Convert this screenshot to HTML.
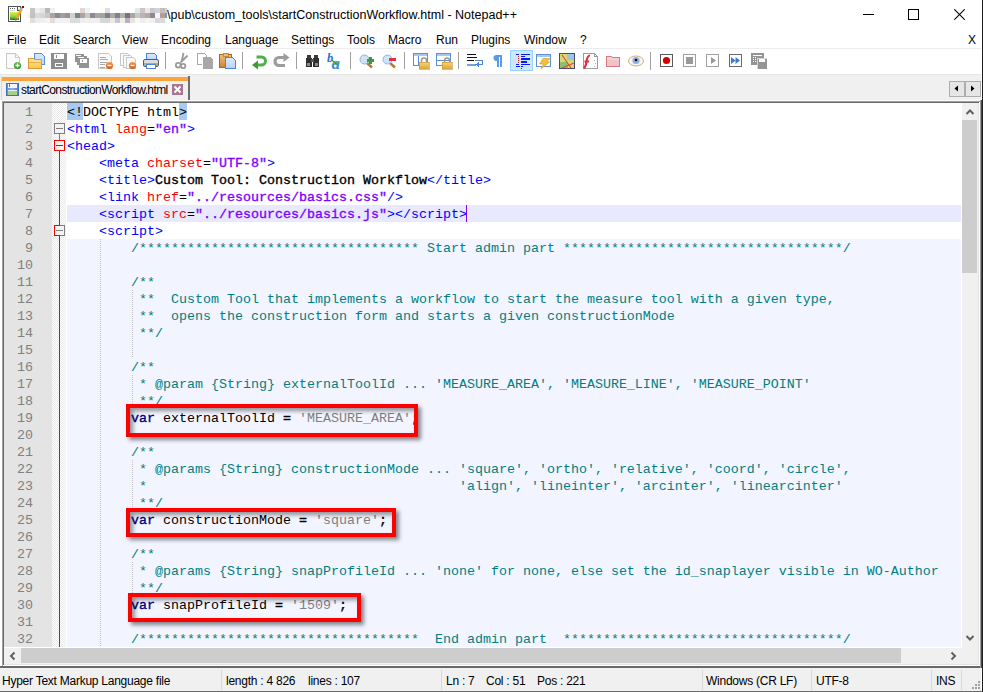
<!DOCTYPE html>
<html><head><meta charset="utf-8">
<style>
*{margin:0;padding:0;box-sizing:border-box}
html,body{width:983px;height:692px;overflow:hidden;background:#fff;position:relative;font-family:"Liberation Sans",sans-serif}
.abs{position:absolute}
.mi{position:absolute;top:33px;font-size:12px;line-height:15px;color:#000;white-space:pre}
.si{position:absolute;top:674px;font-size:12px;line-height:15px;color:#000;white-space:pre;letter-spacing:-0.25px}
.ss{position:absolute;top:670px;width:1px;height:20px;background:#d7d7d7}
.lbg{position:absolute;left:67px;width:894px;height:17px}
.cl{position:absolute;left:67px;height:17px;font-family:"Liberation Mono",monospace;font-size:13.3333px;line-height:17px;white-space:pre;padding-top:1px}
.ln{position:absolute;left:4px;width:29px;text-align:right;height:17px;font-family:"Liberation Mono",monospace;font-size:13.3333px;line-height:17px;color:#808080;padding-top:1px}
.ig{position:absolute;width:1px;background:repeating-linear-gradient(to bottom,#c0c0c0 0 1px,transparent 1px 2px)}
.rb{position:absolute;border:4px solid #ff0000;box-shadow:3px 3px 4px rgba(0,0,0,.45), inset 3px 3px 4px rgba(0,0,0,.40)}
</style></head><body>
<!-- title bar -->
<svg class="abs" style="left:0;top:0" width="170" height="26" viewBox="0 0 170 26" shape-rendering="crispEdges">
<rect x="30" y="8" width="5" height="5" fill="#c8c4c0"/>
<rect x="35" y="8" width="5" height="5" fill="#eef0f2"/>
<rect x="40" y="8" width="5" height="5" fill="#e6e4e6"/>
<rect x="45" y="8" width="5" height="5" fill="#bcb6b4"/>
<rect x="50" y="8" width="5" height="5" fill="#eef2f6"/>
<rect x="80" y="8" width="5" height="5" fill="#e2d6d2"/>
<rect x="85" y="8" width="5" height="5" fill="#eaf2fc"/>
<rect x="100" y="8" width="5" height="5" fill="#fffdf0"/>
<rect x="105" y="8" width="5" height="5" fill="#e0dcec"/>
<rect x="135" y="8" width="5" height="5" fill="#e6e6e6"/>
<rect x="140" y="8" width="5" height="5" fill="#c8c6cc"/>
<rect x="145" y="8" width="5" height="5" fill="#f0e8dc"/>
<rect x="150" y="8" width="5" height="5" fill="#c8c8d0"/>
<rect x="155" y="8" width="5" height="5" fill="#d0d4d8"/>
<rect x="160" y="8" width="5" height="5" fill="#c8bcb4"/>
<rect x="165" y="8" width="2" height="5" fill="#c8d0e0"/>
<rect x="30" y="13" width="5" height="5" fill="#c0c0d0"/>
<rect x="35" y="13" width="5" height="5" fill="#d8dadb"/>
<rect x="40" y="13" width="5" height="5" fill="#d6d6d6"/>
<rect x="45" y="13" width="5" height="5" fill="#ccc6cc"/>
<rect x="50" y="13" width="5" height="5" fill="#b0a49a"/>
<rect x="55" y="13" width="5" height="5" fill="#8c8896"/>
<rect x="60" y="13" width="5" height="5" fill="#a0a0a0"/>
<rect x="65" y="13" width="5" height="5" fill="#a08e90"/>
<rect x="70" y="13" width="5" height="5" fill="#ccd4d4"/>
<rect x="75" y="13" width="5" height="5" fill="#7e828c"/>
<rect x="80" y="13" width="5" height="5" fill="#aaa2aa"/>
<rect x="85" y="13" width="5" height="5" fill="#d2c8b8"/>
<rect x="90" y="13" width="5" height="5" fill="#8a8a98"/>
<rect x="95" y="13" width="5" height="5" fill="#b0a4a0"/>
<rect x="100" y="13" width="5" height="5" fill="#98aaa8"/>
<rect x="105" y="13" width="5" height="5" fill="#8c7888"/>
<rect x="110" y="13" width="5" height="5" fill="#a8aca4"/>
<rect x="115" y="13" width="5" height="5" fill="#80809a"/>
<rect x="120" y="13" width="5" height="5" fill="#b0b4a4"/>
<rect x="125" y="13" width="5" height="5" fill="#8c6c7c"/>
<rect x="130" y="13" width="5" height="5" fill="#a4aaa4"/>
<rect x="135" y="13" width="5" height="5" fill="#bccad4"/>
<rect x="140" y="13" width="5" height="5" fill="#c4b0ac"/>
<rect x="145" y="13" width="5" height="5" fill="#a8b0a8"/>
<rect x="150" y="13" width="5" height="5" fill="#948498"/>
<rect x="155" y="13" width="5" height="5" fill="#f4f8fc"/>
<rect x="160" y="13" width="5" height="5" fill="#b0a098"/>
<rect x="165" y="13" width="2" height="5" fill="#7c98c0"/>
<rect x="30" y="18" width="5" height="5" fill="#e4dcd8"/>
<rect x="35" y="18" width="5" height="5" fill="#e8eef2"/>
<rect x="40" y="18" width="5" height="5" fill="#f0f0f0"/>
<rect x="45" y="18" width="5" height="5" fill="#f4f4f4"/>
<rect x="50" y="18" width="5" height="5" fill="#e4dcdc"/>
<rect x="55" y="18" width="5" height="5" fill="#f0f2f6"/>
<rect x="60" y="18" width="5" height="5" fill="#f2f2f2"/>
<rect x="65" y="18" width="5" height="5" fill="#f2f0f0"/>
<rect x="70" y="18" width="5" height="5" fill="#dcdcdc"/>
<rect x="75" y="18" width="5" height="5" fill="#dcdcdc"/>
<rect x="80" y="18" width="5" height="5" fill="#eeeeee"/>
<rect x="85" y="18" width="5" height="5" fill="#f0f0f0"/>
<rect x="90" y="18" width="5" height="5" fill="#f2f0ee"/>
<rect x="95" y="18" width="5" height="5" fill="#f0f0f0"/>
<rect x="100" y="18" width="5" height="5" fill="#d8d8d8"/>
<rect x="105" y="18" width="5" height="5" fill="#d8d8dc"/>
<rect x="110" y="18" width="5" height="5" fill="#eceae8"/>
<rect x="115" y="18" width="5" height="5" fill="#ccc4c8"/>
<rect x="120" y="18" width="5" height="5" fill="#ecf0e8"/>
<rect x="125" y="18" width="5" height="5" fill="#b8b0c8"/>
<rect x="130" y="18" width="5" height="5" fill="#e8e4e4"/>
<rect x="135" y="18" width="5" height="5" fill="#fcf8f0"/>
<rect x="140" y="18" width="5" height="5" fill="#e8eef4"/>
<rect x="145" y="18" width="5" height="5" fill="#f4f4f0"/>
<rect x="150" y="18" width="5" height="5" fill="#f4f0f0"/>
<rect x="155" y="18" width="5" height="5" fill="#d8d8dc"/>
<rect x="160" y="18" width="5" height="5" fill="#dcd8d8"/>
<rect x="165" y="18" width="2" height="5" fill="#f0f8fc"/>
<rect x="27" y="13" width="3" height="5" fill="#fff4e0"/>
<g>
<rect x="8.5" y="6.5" width="12" height="15" fill="#fff" stroke="#505050"/>
<path d="M17 6.5V10.5H20.5" fill="#e8e8e8" stroke="#505050"/>
<rect x="10" y="7.5" width="1" height="1" fill="#606060"/><rect x="12" y="7.5" width="1" height="1" fill="#606060"/><rect x="14" y="7.5" width="1" height="1" fill="#606060"/>
<rect x="10" y="10" width="5" height="1" fill="#c8d8ec"/>
<linearGradient id="ng" x1="0" y1="0" x2="0" y2="1"><stop offset="0" stop-color="#e6ec50"/><stop offset="0.6" stop-color="#8ad030"/><stop offset="1" stop-color="#108010"/></linearGradient>
<rect x="10" y="12" width="9" height="8" fill="url(#ng)"/>
<path d="M16.5 19L21.5 9" stroke="#f0a820" stroke-width="2.6" shape-rendering="auto"/>
<path d="M21 9.5L22.5 7" stroke="#9ab8d8" stroke-width="2" shape-rendering="auto"/>
<rect x="22" y="6" width="2" height="2" fill="#a00000"/>
<path d="M15.5 20.5L16.8 18.2" stroke="#707070" stroke-width="1.2" shape-rendering="auto"/>
</g>
</svg>
<div class="abs" style="left:167px;top:8px;font-size:12.5px;line-height:14px;white-space:pre;color:#000">\pub\custom_tools\startConstructionWorkflow.html - Notepad++</div>
<div class="abs" style="left:863px;top:14px;width:11px;height:1px;background:#000"></div>
<div class="abs" style="left:908px;top:9px;width:11px;height:11px;border:1px solid #000"></div>
<svg class="abs" style="left:954px;top:9px" width="11" height="11" viewBox="0 0 11 11"><path d="M0.3 0.3L10.7 10.7M10.7 0.3L0.3 10.7" stroke="#000" stroke-width="1.05"/></svg>
<!-- menu -->
<div class="mi" style="left:7px">File</div>
<div class="mi" style="left:39px">Edit</div>
<div class="mi" style="left:73px">Search</div>
<div class="mi" style="left:122px">View</div>
<div class="mi" style="left:161px">Encoding</div>
<div class="mi" style="left:225px">Language</div>
<div class="mi" style="left:291px">Settings</div>
<div class="mi" style="left:347px">Tools</div>
<div class="mi" style="left:388px">Macro</div>
<div class="mi" style="left:436px">Run</div>
<div class="mi" style="left:471px">Plugins</div>
<div class="mi" style="left:524px">Window</div>
<div class="mi" style="left:580px">?</div>
<div class="mi" style="left:968px">X</div>
<div class="abs" style="left:0;top:48px;width:981px;height:1px;background:#ececec"></div>
<!-- toolbar -->
<div class="abs" style="left:0;top:74px;width:981px;height:1px;background:#e6e6e6"></div>
<svg class="abs" style="left:0;top:0" width="983" height="75" viewBox="0 0 983 75" shape-rendering="crispEdges">
<defs>
<linearGradient id="gy" x1="0" y1="0" x2="0" y2="1"><stop offset="0" stop-color="#fde9a0"/><stop offset="1" stop-color="#f3c84a"/></linearGradient>
<linearGradient id="gb" x1="0" y1="0" x2="0" y2="1"><stop offset="0" stop-color="#dbe9fb"/><stop offset="1" stop-color="#b9d3f3"/></linearGradient>
<linearGradient id="gg" x1="0" y1="0" x2="0" y2="1"><stop offset="0" stop-color="#6dbd5a"/><stop offset="1" stop-color="#2e8a2a"/></linearGradient>
<linearGradient id="go" x1="0" y1="0" x2="0" y2="1"><stop offset="0" stop-color="#f59a4a"/><stop offset="1" stop-color="#d9531a"/></linearGradient>
<linearGradient id="gl" x1="0" y1="0" x2="0" y2="1"><stop offset="0" stop-color="#f7d77a"/><stop offset="1" stop-color="#dca636"/></linearGradient>
<linearGradient id="gc" x1="0" y1="0" x2="0" y2="1"><stop offset="0" stop-color="#f2c27c"/><stop offset="1" stop-color="#c98235"/></linearGradient>
</defs>
<!-- 1 new -->
<path d="M6.5 53.5H15.5L19.5 57.5V68.5H6.5Z" fill="#fafafa" stroke="#c8c8c8"/>
<path d="M15.5 53.5V57.5H19.5" fill="none" stroke="#c8c8c8"/>
<circle cx="17.5" cy="65.5" r="3.6" fill="url(#gg)" shape-rendering="auto"/>
<path d="M15.5 65.5h4M17.5 63.5v4" stroke="#fff" stroke-width="1.3" shape-rendering="auto"/>
<!-- 2 open -->
<path d="M34.5 53.5H41.5L44.5 56.5V64.5H34.5Z" fill="url(#gb)" stroke="#5b8fd8"/>
<path d="M28.5 58.5H33.5L34.5 59.5H41.5V68.5H28.5Z" fill="url(#gy)" stroke="#e8962e"/>
<path d="M28.5 62.5H41.5" stroke="#f0b050"/>
<!-- 3 save (gray) -->
<path d="M51 53H66L67 54V69H51Z" fill="#8c8c8c"/>
<rect x="54" y="54" width="10" height="5" fill="#fff"/>
<rect x="56" y="55" width="1" height="3" fill="#8c8c8c"/>
<rect x="55" y="63" width="8" height="4" fill="#fff"/>
<rect x="56" y="64" width="6" height="2" fill="#8c8c8c"/>
<!-- 4 save all -->
<rect x="75" y="54" width="9" height="8" fill="#939393"/>
<rect x="76" y="55" width="5" height="1" fill="#fff"/>
<rect x="77" y="56" width="10" height="9" fill="#939393"/>
<rect x="78" y="57" width="6" height="1" fill="#fff"/>
<rect x="79" y="58" width="10" height="10" fill="#939393"/>
<rect x="80" y="59" width="7" height="4" fill="#fff"/>
<rect x="82" y="60" width="1" height="2" fill="#939393"/>
<!-- 5 close -->
<path d="M98.5 53.5H108.5L111.5 56.5V68.5H98.5Z" fill="#fafafa" stroke="#c8c8c8"/>
<path d="M100 57h6M100 59.5h8M100 62h7M100 64.5h5M100 67h5" stroke="#a8a8a8"/>
<circle cx="109.5" cy="65.5" r="3.6" fill="url(#go)" shape-rendering="auto"/>
<rect x="107.5" y="64.8" width="4" height="1.4" fill="#fff" shape-rendering="auto"/>
<!-- 6 close all -->
<path d="M120.5 53.5H127.5L129.5 55.5V65.5H120.5Z" fill="#fafafa" stroke="#c8c8c8"/>
<path d="M123.5 55.5H130.5L132.5 57.5V67.5H123.5Z" fill="#fafafa" stroke="#c8c8c8"/>
<path d="M126.5 57.5H133.5L135.5 59.5V68.5H126.5Z" fill="#fafafa" stroke="#c8c8c8"/>
<circle cx="132.5" cy="65.5" r="3.6" fill="url(#go)" shape-rendering="auto"/>
<rect x="130.5" y="64.8" width="4" height="1.4" fill="#fff" shape-rendering="auto"/>
<!-- 7 print -->
<path d="M146.5 53.5H154.5L156.5 55.5V60.5H146.5Z" fill="url(#gb)" stroke="#4d86d6"/>
<rect x="143.5" y="59.5" width="15" height="7" rx="1.5" fill="#dcdcdc" stroke="#5a5a5a" shape-rendering="auto"/>
<rect x="144" y="63" width="14" height="3" fill="#a8a8a8"/>
<rect x="146.5" y="64.5" width="9" height="4" fill="#ffffff" stroke="#4d86d6"/>
<!-- sep -->
<rect x="165" y="52" width="1" height="17" fill="#a0a0a0"/>
<!-- 8 cut -->
<g fill="none" stroke="#9a9a9a" stroke-width="1.8" shape-rendering="auto">
<path d="M183.5 53L181.5 62M187.5 55.5L180.5 62.5"/>
<circle cx="178.2" cy="65.2" r="2.3"/><circle cx="183.2" cy="66" r="2.2"/>
</g>
<!-- 9 copy -->
<path d="M197.5 53.5H204.5L206.5 55.5V64.5H197.5Z" fill="#fff" stroke="#a8a8a8"/>
<path d="M203.5 57.5H210.5L212.5 59.5V68.5H203.5Z" fill="#a8a8a8" stroke="#a8a8a8"/>
<path d="M202.5 57.5V68.5" stroke="#fff"/>
<!-- 10 paste -->
<rect x="219.5" y="54.5" width="12" height="13" rx="1" fill="url(#gc)" stroke="#a8661e"/>
<rect x="223" y="53" width="5" height="3" fill="#e8c070" stroke="#a8661e" stroke-width="0.6"/>
<path d="M225.5 57.5H232.5L235.5 60.5V68.5H225.5Z" fill="url(#gb)" stroke="#4d86d6"/>
<!-- sep -->
<rect x="242" y="52" width="1" height="17" fill="#a0a0a0"/>
<!-- 11 undo -->
<path d="M256.5 57H261.5A4 4 0 0 1 261.5 65H257" fill="none" stroke="#4fb04a" stroke-width="3" shape-rendering="auto"/>
<path d="M252 65L258 60.5V69.5Z" fill="#3d9a37" shape-rendering="auto"/>
<!-- 12 redo -->
<path d="M284 57.5H279A4 4 0 0 0 279 65.5H285" fill="none" stroke="#9c9c9c" stroke-width="3.2" shape-rendering="auto"/>
<path d="M289.5 57.5L283.5 53V62Z" fill="#9c9c9c" shape-rendering="auto"/>
<!-- sep -->
<rect x="296" y="52" width="1" height="17" fill="#a0a0a0"/>
<!-- 13 find -->
<rect x="307" y="55" width="4" height="3" fill="#3a3a3a"/><rect x="314" y="55" width="4" height="3" fill="#3a3a3a"/>
<rect x="306" y="58" width="6" height="9" fill="#2e2e2e"/><rect x="313" y="58" width="6" height="9" fill="#2e2e2e"/>
<rect x="311" y="59" width="3" height="3" fill="#555"/>
<rect x="307" y="63" width="3" height="3" fill="#8a8a8a"/><rect x="315" y="63" width="3" height="3" fill="#8a8a8a"/>
<!-- 14 replace -->
<text x="327" y="62" font-family="Liberation Serif" font-style="italic" font-weight="bold" font-size="12.5" fill="#2c6fd6" shape-rendering="auto">b</text>
<text x="331.5" y="68.5" font-family="Liberation Serif" font-style="italic" font-weight="bold" font-size="17" fill="#3d8be8" shape-rendering="auto">a</text>
<path d="M331 59.5L336 63.5" stroke="#3aa03a" stroke-width="1.5" shape-rendering="auto"/>
<path d="M337.5 65L333.5 64.5L336.5 61.5Z" fill="#3aa03a" shape-rendering="auto"/>
<!-- sep -->
<rect x="350" y="52" width="1" height="17" fill="#a0a0a0"/>
<!-- 15 zoom in -->
<path d="M367 63L372 67.5" stroke="#b07a3c" stroke-width="2.4" shape-rendering="auto"/>
<circle cx="364.5" cy="59.5" r="4.5" fill="#cfe2f8" stroke="#90b4e0" shape-rendering="auto"/>
<rect x="367" y="59" width="7" height="2.5" fill="#3a9a35"/><rect x="369.2" y="56.8" width="2.5" height="7" fill="#3a9a35"/>
<!-- 16 zoom out -->
<path d="M390 63L395 67.5" stroke="#b07a3c" stroke-width="2.4" shape-rendering="auto"/>
<circle cx="387.5" cy="59.5" r="4.5" fill="#cfe2f8" stroke="#90b4e0" shape-rendering="auto"/>
<rect x="389" y="58" width="7" height="3" fill="#e8303a"/>
<!-- sep -->
<rect x="404" y="52" width="1" height="17" fill="#a0a0a0"/>
<!-- 17 sync v -->
<rect x="413.5" y="53.5" width="14" height="12" fill="#fff" stroke="#5b8fd8"/>
<rect x="414" y="54" width="13" height="2" fill="#a8c8f0"/>
<path d="M418.5 56V65" stroke="#5b8fd8"/>
<path d="M421.5 62V60.5A2.5 2.5 0 0 1 426.5 60.5V62" fill="none" stroke="#9a9a9a" stroke-width="1.5" shape-rendering="auto"/>
<rect x="419" y="62" width="10" height="7" fill="url(#gl)" stroke="#c9902a" stroke-width="0.6"/>
<!-- 18 sync h -->
<rect x="436.5" y="53.5" width="14" height="12" fill="#fff" stroke="#5b8fd8"/>
<rect x="437" y="54" width="13" height="2" fill="#a8c8f0"/>
<path d="M437 60.5H450" stroke="#5b8fd8"/>
<path d="M444.5 62V60.5A2.5 2.5 0 0 1 449.5 60.5V62" fill="none" stroke="#9a9a9a" stroke-width="1.5" shape-rendering="auto"/>
<rect x="442" y="62" width="10" height="7" fill="url(#gl)" stroke="#c9902a" stroke-width="0.6"/>
<!-- sep -->
<rect x="458" y="52" width="1" height="17" fill="#a0a0a0"/>
<!-- 19 wrap -->
<rect x="467" y="54" width="9" height="1" fill="#111"/><rect x="467" y="57" width="10" height="1" fill="#111"/><rect x="467" y="60" width="7" height="1" fill="#111"/>
<rect x="467" y="64" width="9" height="2" fill="#6fa3e8"/>
<path d="M475 60.5H482.5V64.5H477" fill="none" stroke="#4d86d6"/>
<path d="M479 62L475.5 64.5L479 67Z" fill="#4d86d6"/>
<!-- 20 pilcrow -->
<path d="M496 55H502V67H500V57H499V67H497V61A3 3 0 0 1 496 55Z" fill="#5b9ae8" shape-rendering="auto"/>
<!-- 21 indent guide (active) -->
<rect x="510.5" y="50.5" width="22" height="20" fill="#cce8ff" stroke="#99d1ff"/>
<g fill="#0a1cf0">
<rect x="516" y="54" width="3" height="1"/><rect x="521" y="54" width="9" height="1"/>
<rect x="521" y="56" width="4" height="1"/>
<rect x="521" y="58" width="9" height="2"/>
<rect x="521" y="61" width="6" height="2"/>
<rect x="516" y="64" width="3" height="1"/><rect x="521" y="64" width="9" height="1"/>
<rect x="516" y="66" width="4" height="1"/><rect x="521" y="66" width="2" height="1"/>
<rect x="521" y="68" width="1" height="1"/>
</g>
<g fill="#e02020"><rect x="518" y="56" width="1" height="1"/><rect x="518" y="58" width="1" height="1"/><rect x="518" y="60" width="1" height="1"/><rect x="518" y="62" width="1" height="1"/></g>
<!-- 22 udl -->
<rect x="536.5" y="54.5" width="14" height="12" fill="#fff" stroke="#5b8fd8"/>
<rect x="537" y="55" width="13" height="2" fill="#a8c8f0"/>
<path d="M543 58.5H550L546.5 62H549.5L541 69L543.5 64H539.5Z" fill="#f2c23e" stroke="#d9a126" stroke-width="0.7" shape-rendering="auto"/>
<!-- 23 doc map -->
<rect x="559.5" y="53.5" width="15" height="15" fill="#d8d870" stroke="#4a4a6a"/>
<rect x="567" y="54" width="7" height="6" fill="#9cc4e8"/>
<rect x="560" y="62" width="8" height="6" fill="#8cc070"/>
<path d="M562 55L571 68M574 63L562 68" stroke="#e04a3a" stroke-width="1.1" shape-rendering="auto"/>
<!-- 24 function list -->
<path d="M583.5 53.5H594.5L597.5 56.5V68.5H583.5Z" fill="#fff" stroke="#9a9a9a"/>
<path d="M594.5 53.5V56.5H597.5" fill="none" stroke="#9a9a9a"/>
<path d="M590 55.5C587.5 55.5 587 58 586.5 61.5C586 65 585.5 67.5 583.5 68M584.5 61.5H589" fill="none" stroke="#e03040" stroke-width="2.2" shape-rendering="auto"/><path d="M594 60v1M595 63v1M594 66v1" stroke="#b0b0b0"/>
<!-- 25 folder -->
<path d="M606.5 56.5H611.5L612.5 57.5H619.5V66.5H606.5Z" fill="#f4d0d4" stroke="#d87a82"/>
<rect x="607" y="60" width="12" height="6" fill="#f2c2c8"/>
<!-- 26 eye -->
<ellipse cx="636" cy="61" rx="7.5" ry="5" fill="#f4f4f4" stroke="#d8b070" shape-rendering="auto"/>
<circle cx="636" cy="60.5" r="3.6" fill="#8cb0e0" shape-rendering="auto"/>
<circle cx="636" cy="60" r="1.3" fill="#101010" shape-rendering="auto"/>
<!-- sep -->
<rect x="650" y="52" width="1" height="18" fill="#a0a0a0"/>
<!-- 27 record -->
<rect x="660.5" y="54.5" width="12" height="12" fill="#fff" stroke="#5a5a5a"/>
<circle cx="666.5" cy="60.5" r="3.6" fill="#d00000" shape-rendering="auto"/>
<!-- 28 stop -->
<rect x="683.5" y="54.5" width="12" height="12" fill="#fff" stroke="#a0a0a0"/>
<rect x="686" y="57" width="7" height="7" fill="#9a9a9a"/>
<!-- 29 play -->
<rect x="706.5" y="54.5" width="12" height="12" fill="#fff" stroke="#a0a0a0"/>
<path d="M711 57L716 60.5L711 64Z" fill="#9a9a9a" shape-rendering="auto"/>
<!-- 30 play multi -->
<rect x="729.5" y="54.5" width="12" height="12" fill="#fff" stroke="#6a6a6a"/>
<path d="M731 57L735.5 60.5L731 64ZM735.5 57L740 60.5L735.5 64Z" fill="#3a78e0" shape-rendering="auto"/>
<!-- 31 save macro -->
<rect x="751" y="53" width="13" height="12" fill="#959595"/>
<rect x="753" y="55" width="9" height="1" fill="#fff"/>
<g fill="#fff"><rect x="753" y="57" width="1" height="1"/><rect x="755" y="57" width="1" height="1"/><rect x="753" y="59" width="1" height="1"/><rect x="755" y="59" width="1" height="1"/><rect x="753" y="61" width="1" height="1"/><rect x="755" y="61" width="1" height="1"/></g>
<rect x="757" y="58" width="10" height="11" fill="#959595" stroke="#fff" stroke-width="0.6"/>
<rect x="759" y="59" width="6" height="3" fill="#fff"/>
</svg>

<!-- tab bar -->
<div class="abs" style="left:0;top:75px;width:981px;height:26px;background:#f0f0f0"></div>
<div class="abs" style="left:1px;top:76px;width:189px;height:25px;background:#f0f0f0;border-left:1px solid #d9d9d9;border-right:2px solid #6e6e6e"></div>
<div class="abs" style="left:2px;top:77px;width:186px;height:4px;background:#faa43a"></div>
<svg class="abs" style="left:0;top:78px" width="30" height="22" viewBox="0 78 30 22" shape-rendering="crispEdges">
<linearGradient id="tb" x1="0" y1="0" x2="1" y2="0"><stop offset="0" stop-color="#5a8ad8"/><stop offset="0.5" stop-color="#8eb4ec"/><stop offset="1" stop-color="#4a78c8"/></linearGradient>
<rect x="6" y="83" width="13" height="13" fill="url(#tb)"/>
<rect x="6.5" y="83.5" width="12" height="12" fill="none" stroke="#4070c0"/>
<rect x="8" y="84" width="9" height="4" fill="#f4f8fc"/>
<rect x="9" y="84" width="1" height="3" fill="#4a78c8"/>
<rect x="8" y="91" width="9" height="4" fill="#a8d088"/>
<rect x="8" y="90" width="9" height="1" fill="#e8f0f8"/>
</svg>
<div class="abs" style="left:21px;top:84px;font-size:12px;line-height:13px;letter-spacing:-0.62px;white-space:pre;color:#000">startConstructionWorkflow.html</div>
<!-- tab close -->
<div class="abs" style="left:172px;top:84px;width:11px;height:11px;background:#a5788f"></div>
<svg class="abs" style="left:172px;top:84px" width="11" height="11" viewBox="0 0 11 11"><path d="M2.5 2.5L8.5 8.5M8.5 2.5L2.5 8.5" stroke="#fff" stroke-width="2"/></svg>
<!-- tab scroll buttons -->
<div class="abs" style="left:949px;top:81px;width:16px;height:16px;background:#e6e6e6;border:1px solid #adadad"></div>
<div class="abs" style="left:965px;top:81px;width:16px;height:16px;background:#e6e6e6;border:1px solid #adadad"></div>
<svg class="abs" style="left:949px;top:81px" width="32" height="16" viewBox="0 0 32 16"><path d="M9 4.5L5.5 7.5L9 10.5Z" fill="#000"/><path d="M22 4.5L25.5 7.5L22 10.5Z" fill="#000"/></svg>
<div class="abs" style="left:0;top:100px;width:981px;height:1px;background:#fafafa"></div>
<!-- editor frame -->
<div class="abs" style="left:2px;top:101px;width:978px;height:1px;background:#a0a0a0"></div>
<div class="abs" style="left:2px;top:101px;width:1px;height:565px;background:#a0a0a0"></div>
<div class="abs" style="left:3px;top:102px;width:977px;height:1px;background:#696969"></div>
<div class="abs" style="left:3px;top:102px;width:1px;height:563px;background:#696969"></div>
<div class="abs" style="left:4px;top:664px;width:975px;height:1px;background:#e3e3e3"></div>
<div class="abs" style="left:978px;top:103px;width:1px;height:562px;background:#e3e3e3"></div>
<div class="abs" style="left:3px;top:665px;width:977px;height:1px;background:#ffffff"></div>
<div class="abs" style="left:979px;top:102px;width:1px;height:564px;background:#ffffff"></div>
<div class="abs" style="left:0;top:666px;width:981px;height:2px;background:#696969"></div>
<div class="abs" style="left:980px;top:100px;width:1px;height:568px;background:#9a9a9a"></div>
<!-- gutter -->
<div class="abs" style="left:4px;top:103px;width:48px;height:544px;background:#e4e4e4"></div>
<div class="abs" style="left:52px;top:103px;width:14px;height:544px;background:repeating-conic-gradient(#e9e9e9 0 25%,#ffffff 0 50%) 0 0/2px 2px"></div>
<div class="abs" style="left:4px;top:647px;width:958px;height:1px;background:#ffffff"></div>
<div class="lbg" style="top:103px;background:#ffffff"></div>
<div class="lbg" style="top:120px;background:#ffffff"></div>
<div class="lbg" style="top:137px;background:#ffffff"></div>
<div class="lbg" style="top:154px;background:#ffffff"></div>
<div class="lbg" style="top:171px;background:#ffffff"></div>
<div class="lbg" style="top:188px;background:#ffffff"></div>
<div class="lbg" style="top:205px;background:#e8e8ff"></div>
<div class="lbg" style="top:222px;background:#ffffff"></div>
<div class="lbg" style="top:239px;background:#f2f4ff"></div>
<div class="lbg" style="top:256px;background:#f2f4ff"></div>
<div class="lbg" style="top:273px;background:#f2f4ff"></div>
<div class="lbg" style="top:290px;background:#f2f4ff"></div>
<div class="lbg" style="top:307px;background:#f2f4ff"></div>
<div class="lbg" style="top:324px;background:#f2f4ff"></div>
<div class="lbg" style="top:341px;background:#f2f4ff"></div>
<div class="lbg" style="top:358px;background:#f2f4ff"></div>
<div class="lbg" style="top:375px;background:#f2f4ff"></div>
<div class="lbg" style="top:392px;background:#f2f4ff"></div>
<div class="lbg" style="top:409px;background:#f2f4ff"></div>
<div class="lbg" style="top:426px;background:#f2f4ff"></div>
<div class="lbg" style="top:443px;background:#f2f4ff"></div>
<div class="lbg" style="top:460px;background:#f2f4ff"></div>
<div class="lbg" style="top:477px;background:#f2f4ff"></div>
<div class="lbg" style="top:494px;background:#f2f4ff"></div>
<div class="lbg" style="top:511px;background:#f2f4ff"></div>
<div class="lbg" style="top:528px;background:#f2f4ff"></div>
<div class="lbg" style="top:545px;background:#f2f4ff"></div>
<div class="lbg" style="top:562px;background:#f2f4ff"></div>
<div class="lbg" style="top:579px;background:#f2f4ff"></div>
<div class="lbg" style="top:596px;background:#f2f4ff"></div>
<div class="lbg" style="top:613px;background:#f2f4ff"></div>
<div class="lbg" style="top:630px;background:#f2f4ff"></div>
<div style="position:absolute;left:67px;top:103px;width:16px;height:17px;background:#a6caf0"></div><div style="position:absolute;left:179px;top:103px;width:8px;height:17px;background:#a6caf0"></div>
<div class="cl" style="top:103px"><span style="color:#000000">&lt;!</span><span style="color:#000000">DOCTYPE html</span><span style="color:#000000">&gt;</span></div>
<div class="ln" style="top:103px">1</div>
<div class="cl" style="top:120px"><span style="color:#0000ff">&lt;html</span><span style="color:#000000"> </span><span style="color:#ff0000">lang</span><span style="color:#000000">=</span><span style="color:#8000ff;-webkit-text-stroke:0.35px #8000ff">"en"</span><span style="color:#0000ff">&gt;</span></div>
<div class="ln" style="top:120px">2</div>
<div class="cl" style="top:137px"><span style="color:#0000ff">&lt;head&gt;</span></div>
<div class="ln" style="top:137px">3</div>
<div class="cl" style="top:154px"><span style="color:#000000">    </span><span style="color:#0000ff">&lt;meta</span><span style="color:#000000"> </span><span style="color:#ff0000">charset</span><span style="color:#000000">=</span><span style="color:#8000ff;-webkit-text-stroke:0.35px #8000ff">"UTF-8"</span><span style="color:#0000ff">&gt;</span></div>
<div class="ln" style="top:154px">4</div>
<div class="cl" style="top:171px"><span style="color:#000000">    </span><span style="color:#0000ff">&lt;title&gt;</span><span style="color:#000000;-webkit-text-stroke:0.35px #000000">Custom Tool: Construction Workflow</span><span style="color:#0000ff">&lt;/title&gt;</span></div>
<div class="ln" style="top:171px">5</div>
<div class="cl" style="top:188px"><span style="color:#000000">    </span><span style="color:#0000ff">&lt;link</span><span style="color:#000000"> </span><span style="color:#ff0000">href</span><span style="color:#000000">=</span><span style="color:#8000ff;-webkit-text-stroke:0.35px #8000ff">"../resources/basics.css"</span><span style="color:#0000ff">/&gt;</span></div>
<div class="ln" style="top:188px">6</div>
<div class="cl" style="top:205px"><span style="color:#000000">    </span><span style="color:#0000ff">&lt;script</span><span style="color:#000000"> </span><span style="color:#ff0000">src</span><span style="color:#000000">=</span><span style="color:#8000ff;-webkit-text-stroke:0.35px #8000ff">"../resources/basics.js"</span><span style="color:#0000ff">&gt;</span><span style="color:#0000ff">&lt;/script&gt;</span></div>
<div class="ln" style="top:205px">7</div>
<div class="cl" style="top:222px"><span style="color:#000000">    </span><span style="color:#0000ff">&lt;script&gt;</span></div>
<div class="ln" style="top:222px">8</div>
<div class="cl" style="top:239px"><span style="color:#000000">        </span><span style="color:#008080">/*********************************** Start admin part ***********************************/</span></div>
<div class="ln" style="top:239px">9</div>
<div class="cl" style="top:256px"></div>
<div class="ln" style="top:256px">10</div>
<div class="cl" style="top:273px"><span style="color:#000000">        </span><span style="color:#008080">/**</span></div>
<div class="ln" style="top:273px">11</div>
<div class="cl" style="top:290px"><span style="color:#000000">         </span><span style="color:#008080">**  Custom Tool that implements a workflow to start the measure tool with a given type,</span></div>
<div class="ln" style="top:290px">12</div>
<div class="cl" style="top:307px"><span style="color:#000000">         </span><span style="color:#008080">**  opens the construction form and starts a given constructionMode</span></div>
<div class="ln" style="top:307px">13</div>
<div class="cl" style="top:324px"><span style="color:#000000">         </span><span style="color:#008080">**/</span></div>
<div class="ln" style="top:324px">14</div>
<div class="cl" style="top:341px"></div>
<div class="ln" style="top:341px">15</div>
<div class="cl" style="top:358px"><span style="color:#000000">        </span><span style="color:#008080">/**</span></div>
<div class="ln" style="top:358px">16</div>
<div class="cl" style="top:375px"><span style="color:#000000">         </span><span style="color:#008080">* @param {String} externalToolId ... 'MEASURE_AREA', 'MEASURE_LINE', 'MEASURE_POINT'</span></div>
<div class="ln" style="top:375px">17</div>
<div class="cl" style="top:392px"><span style="color:#000000">         </span><span style="color:#008080">**/</span></div>
<div class="ln" style="top:392px">18</div>
<div class="cl" style="top:409px"><span style="color:#000000">        </span><span style="color:#000080;-webkit-text-stroke:0.35px #000080">var</span><span style="color:#000000"> externalToolId </span><span style="color:#000000;-webkit-text-stroke:0.35px #000000">=</span><span style="color:#000000"> </span><span style="color:#808080">'MEASURE_AREA'</span><span style="color:#000000;-webkit-text-stroke:0.35px #000000">;</span></div>
<div class="ln" style="top:409px">19</div>
<div class="cl" style="top:426px"></div>
<div class="ln" style="top:426px">20</div>
<div class="cl" style="top:443px"><span style="color:#000000">        </span><span style="color:#008080">/**</span></div>
<div class="ln" style="top:443px">21</div>
<div class="cl" style="top:460px"><span style="color:#000000">         </span><span style="color:#008080">* @params {String} constructionMode ... 'square', 'ortho', 'relative', 'coord', 'circle',</span></div>
<div class="ln" style="top:460px">22</div>
<div class="cl" style="top:477px"><span style="color:#000000">         </span><span style="color:#008080">*                                       'align', 'lineinter', 'arcinter', 'linearcinter'</span></div>
<div class="ln" style="top:477px">23</div>
<div class="cl" style="top:494px"><span style="color:#000000">         </span><span style="color:#008080">**/</span></div>
<div class="ln" style="top:494px">24</div>
<div class="cl" style="top:511px"><span style="color:#000000">        </span><span style="color:#000080;-webkit-text-stroke:0.35px #000080">var</span><span style="color:#000000"> constructionMode </span><span style="color:#000000;-webkit-text-stroke:0.35px #000000">=</span><span style="color:#000000"> </span><span style="color:#808080">'square'</span><span style="color:#000000;-webkit-text-stroke:0.35px #000000">;</span></div>
<div class="ln" style="top:511px">25</div>
<div class="cl" style="top:528px"></div>
<div class="ln" style="top:528px">26</div>
<div class="cl" style="top:545px"><span style="color:#000000">        </span><span style="color:#008080">/**</span></div>
<div class="ln" style="top:545px">27</div>
<div class="cl" style="top:562px"><span style="color:#000000">         </span><span style="color:#008080">* @params {String} snapProfileId ... 'none' for none, else set the id_snaplayer visible in WO-Author</span></div>
<div class="ln" style="top:562px">28</div>
<div class="cl" style="top:579px"><span style="color:#000000">         </span><span style="color:#008080">**/</span></div>
<div class="ln" style="top:579px">29</div>
<div class="cl" style="top:596px"><span style="color:#000000">        </span><span style="color:#000080;-webkit-text-stroke:0.35px #000080">var</span><span style="color:#000000"> snapProfileId </span><span style="color:#000000;-webkit-text-stroke:0.35px #000000">=</span><span style="color:#000000"> </span><span style="color:#808080">'1509'</span><span style="color:#000000;-webkit-text-stroke:0.35px #000000">;</span></div>
<div class="ln" style="top:596px">30</div>
<div class="cl" style="top:613px"></div>
<div class="ln" style="top:613px">31</div>
<div class="cl" style="top:630px"><span style="color:#000000">        </span><span style="color:#008080">/***********************************  End admin part  ***********************************/</span></div>
<div class="ln" style="top:630px">32</div>
<div class="ig" style="left:100px;top:239px;height:408px"></div>
<div class="ig" style="left:132px;top:290px;height:68px"></div>
<div class="ig" style="left:132px;top:375px;height:34px"></div>
<div class="ig" style="left:132px;top:460px;height:51px"></div>
<div class="ig" style="left:132px;top:562px;height:34px"></div>
<div style="position:absolute;left:466px;top:205px;width:1px;height:17px;background:#8000ff"></div>
<!-- fold markers -->
<div class="abs" style="left:59px;top:134px;width:1px;height:6px;background:#808080"></div>
<div class="abs" style="left:59px;top:151px;width:1px;height:496px;background:#ff0000"></div>
<div class="abs" style="left:54px;top:123px;width:11px;height:11px;border:1px solid #808080;background:#f4f4f4"></div>
<div class="abs" style="left:56px;top:128px;width:7px;height:1px;background:#808080"></div>
<div class="abs" style="left:54px;top:140px;width:11px;height:11px;border:1px solid #ff0000;background:#f4f4f4"></div>
<div class="abs" style="left:56px;top:145px;width:7px;height:1px;background:#ff0000"></div>
<div class="abs" style="left:54px;top:225px;width:11px;height:11px;border:1px solid #808080;border-left-color:#ff0000;background:#f4f4f4"></div>
<div class="abs" style="left:54px;top:225px;width:6px;height:1px;background:#ff0000"></div>
<div class="abs" style="left:54px;top:235px;width:6px;height:1px;background:#ff0000"></div>
<div class="abs" style="left:56px;top:230px;width:7px;height:1px;background:#808080"></div>
<div class="rb" style="left:126px;top:404px;width:292px;height:33px"></div>
<div class="rb" style="left:126px;top:508px;width:270px;height:29px"></div>
<div class="rb" style="left:128px;top:593px;width:233px;height:29px"></div>
<!-- v scrollbar -->
<div class="abs" style="left:962px;top:103px;width:16px;height:561px;background:#f0f0f0"></div>
<div class="abs" style="left:962px;top:120px;width:15px;height:153px;background:#cdcdcd"></div>
<svg class="abs" style="left:962px;top:103px" width="16" height="17" viewBox="0 0 16 17"><path d="M4.5 11L8 7.5L11.5 11" fill="none" stroke="#606060" stroke-width="2"/></svg>
<svg class="abs" style="left:962px;top:630px" width="16" height="17" viewBox="0 0 16 17"><path d="M4.5 6L8 9.5L11.5 6" fill="none" stroke="#606060" stroke-width="2"/></svg>
<!-- h scrollbar -->
<div class="abs" style="left:4px;top:648px;width:958px;height:16px;background:#f0f0f0"></div>
<div class="abs" style="left:21px;top:648px;width:880px;height:15px;background:#cdcdcd"></div>
<svg class="abs" style="left:4px;top:648px" width="17" height="16" viewBox="0 0 17 16"><path d="M10.5 4.5L7 8L10.5 11.5" fill="none" stroke="#606060" stroke-width="2"/></svg>
<svg class="abs" style="left:945px;top:648px" width="17" height="16" viewBox="0 0 17 16"><path d="M6.5 4.5L10 8L6.5 11.5" fill="none" stroke="#606060" stroke-width="2"/></svg>
<!-- status bar -->
<div class="abs" style="left:0;top:668px;width:981px;height:23px;background:#f0f0f0"></div>
<div class="si" style="left:2px">Hyper Text Markup Language file</div>
<div class="si" style="left:226px">length : 4 826</div>
<div class="si" style="left:308px">lines : 107</div>
<div class="si" style="left:446px">Ln : 7</div>
<div class="si" style="left:486px">Col : 51</div>
<div class="si" style="left:537px">Pos : 221</div>
<div class="si" style="left:706px">Windows (CR LF)</div>
<div class="si" style="left:816px">UTF-8</div>
<div class="si" style="left:936px">INS</div>
<div class="ss" style="left:221px"></div>
<div class="ss" style="left:441px"></div>
<div class="ss" style="left:702px"></div>
<div class="ss" style="left:811px"></div>
<div class="ss" style="left:931px"></div>
<div class="ss" style="left:961px"></div>
<svg class="abs" style="left:970px;top:679px" width="11" height="11" viewBox="0 0 11 11" fill="#a0a0a0"><rect x="8" y="2" width="2" height="2"/><rect x="5" y="5" width="2" height="2"/><rect x="8" y="5" width="2" height="2"/><rect x="2" y="8" width="2" height="2"/><rect x="5" y="8" width="2" height="2"/><rect x="8" y="8" width="2" height="2"/></svg>
<div class="abs" style="left:0;top:691px;width:983px;height:1px;background:#6b6b6b"></div>
<!-- window right edge -->
<div class="abs" style="left:982px;top:0;width:1px;height:692px;background:#1e1e1e"></div>
<div class="abs" style="left:981px;top:100px;width:1px;height:568px;background:#4a4a4a"></div>
</body></html>
